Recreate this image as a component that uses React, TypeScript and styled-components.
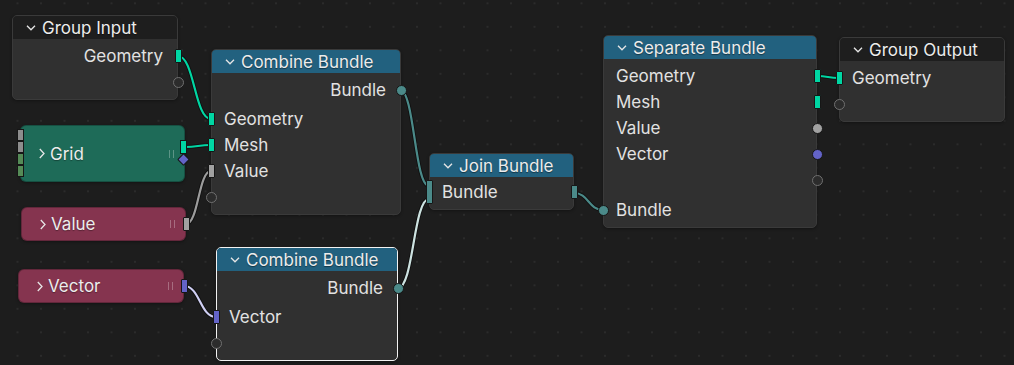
import styled, { createGlobalStyle } from "styled-components"

const GlobalStyle = createGlobalStyle`
  html, body { margin: 0; padding: 0; background: #1d1d1d; }
  body { font-family: Inter, "Noto Sans", "DejaVu Sans", sans-serif; }
`

const COLORS = {
  geometry: "#00d6a3",
  float: "#a1a1a1",
  vector: "#6363c7",
  bundle: "#4b8a89",
  int: "#558b57",
}

const Canvas = styled.div`
  position: relative;
  width: 1014px;
  height: 365px;
  overflow: hidden;
  background-color: #1d1d1d;
  background-image: radial-gradient(circle, #2b2b2b 0.9px, transparent 1.1px);
  background-size: 23.5px 23.5px;
  background-position: 5.75px -8.45px;
`

const Wires = styled.svg`
  position: absolute;
  left: 0;
  top: 0;
  pointer-events: none;
`

const Node = styled.div<{ $x: number; $y: number; $w: number; $selected?: boolean }>`
  position: absolute;
  left: ${(p) => p.$x}px;
  top: ${(p) => p.$y}px;
  width: ${(p) => p.$w}px;
  box-sizing: border-box;
  background: #303030;
  border: 1px solid ${(p) => (p.$selected ? "#f2f2f2" : "#3a3a3a")};
  border-radius: 5px;
  color: #e2e2e2;
  font-size: 17px;
  box-shadow: 0 1px 3px rgba(0, 0, 0, 0.35);
`

const Header = styled.div<{ $color: string }>`
  display: flex;
  align-items: center;
  gap: 6px;
  height: 23px;
  padding-left: 13px;
  background: ${(p) => p.$color};
  border-radius: 4px 4px 0 0;
  color: #ececec;
  text-shadow: 0 1px 1px rgba(0, 0, 0, 0.45);
  white-space: nowrap;
`

const Body = styled.div<{ $padTop?: number }>`
  display: flex;
  flex-direction: column;
  padding: ${(p) => p.$padTop ?? 4}px 0 4px;
`

const Row = styled.div<{ $right?: boolean }>`
  position: relative;
  display: flex;
  align-items: center;
  justify-content: ${(p) => (p.$right ? "flex-end" : "flex-start")};
  height: 26px;
  padding: 0 14px 0 12px;
  white-space: nowrap;
`

const Gap = styled.div<{ $h: number }>`
  height: ${(p) => p.$h}px;
`

type Shape = "rect" | "circle" | "hollow" | "diamond" | "multi"

const SIZES: Record<Shape, [number, number]> = {
  rect: [7, 14],
  multi: [7, 24],
  circle: [11, 11],
  hollow: [11, 11],
  diamond: [9, 9],
}

const Socket = styled.span<{ $shape: Shape; $color?: string; $side: "left" | "right"; $inline?: boolean }>`
  display: block;
  position: ${(p) => (p.$inline ? "relative" : "absolute")};
  top: ${(p) => (p.$inline ? "0" : "50%")};
  ${(p) => p.$side}: ${(p) => (p.$inline ? 0 : -1 - SIZES[p.$shape][0] / 2)}px;
  box-sizing: border-box;
  width: ${(p) => SIZES[p.$shape][0]}px;
  height: ${(p) => SIZES[p.$shape][1]}px;
  margin-top: ${(p) => (p.$inline ? 1 : -SIZES[p.$shape][1] / 2)}px;
  background: ${(p) => (p.$shape === "hollow" ? "#2c2c2c" : p.$color)};
  border: 1px solid ${(p) => (p.$shape === "hollow" ? "#707070" : "#161616")};
  border-radius: ${(p) => (p.$shape === "circle" || p.$shape === "hollow" ? "50%" : "1px")};
  transform: ${(p) => (p.$shape === "diamond" ? "rotate(45deg)" : "none")};
  z-index: 2;
`

const Collapsed = styled.div<{ $x: number; $y: number; $w: number; $h: number; $color: string }>`
  position: absolute;
  left: ${(p) => p.$x}px;
  top: ${(p) => p.$y}px;
  width: ${(p) => p.$w}px;
  height: ${(p) => p.$h}px;
  box-sizing: border-box;
  display: flex;
  align-items: center;
  gap: 5px;
  padding-left: 18px;
  background: ${(p) => p.$color};
  border: 1px solid rgba(0, 0, 0, 0.25);
  border-radius: 6px;
  color: #ececec;
  font-size: 17px;
  text-shadow: 0 1px 1px rgba(0, 0, 0, 0.35);
  box-shadow: 0 1px 3px rgba(0, 0, 0, 0.35);
`

const Grip = styled.span`
  position: absolute;
  right: 10px;
  top: 50%;
  width: 3px;
  height: 8px;
  margin-top: -4px;
  border-left: 1.5px solid rgba(255, 255, 255, 0.28);
  border-right: 1.5px solid rgba(255, 255, 255, 0.28);
`

const SideSockets = styled.div<{ $side: "left" | "right"; $top: number }>`
  position: absolute;
  ${(p) => p.$side}: -4px;
  top: ${(p) => p.$top}px;
  display: flex;
  flex-direction: column;
  align-items: center;
`

const Stripe = styled.span<{ $color: string; $h?: number }>`
  display: block;
  box-sizing: border-box;
  width: 7px;
  height: ${(p) => p.$h ?? 12}px;
  background: ${(p) => p.$color};
  border: 1px solid #161616;
`

const Chevron = ({ open }: { open: boolean }) =>
  open ? (
    <svg width="10" height="6" viewBox="0 0 10 6">
      <polyline points="1,0.8 5,4.8 9,0.8" fill="none" stroke="#e6e6e6" strokeWidth="1.3" />
    </svg>
  ) : (
    <svg width="6" height="11" viewBox="0 0 6 11">
      <polyline points="0.8,1 5,5.5 0.8,10" fill="none" stroke="#e6e6e6" strokeWidth="1.3" />
    </svg>
  )

const wire = (x1: number, y1: number, x2: number, y2: number) => {
  const h = Math.max(Math.abs(x2 - x1) * 0.5, 8)
  return `M${x1},${y1} C${x1 + h},${y1} ${x2 - h},${y2} ${x2},${y2}`
}

const links = [
  { d: wire(178, 56, 211, 119), c: COLORS.geometry },
  { d: wire(185, 147, 211, 145), c: COLORS.geometry },
  { d: wire(186, 224, 211, 171), c: "#9c9c9c" },
  { d: wire(184, 286, 216, 317), c: "#cfcff3" },
  { d: wire(400, 90, 429, 186), c: COLORS.bundle },
  { d: wire(398, 288, 429, 199), c: "#cde3e1" },
  { d: wire(574, 193, 603, 210), c: COLORS.bundle },
  { d: wire(817, 76, 839, 78), c: COLORS.geometry },
]

const BLUE = "#22617f"

export default function App() {
  return (
    <>
      <GlobalStyle />
      <Canvas>
        <Wires width="1014" height="365">
          {links.map((l, i) => (
            <g key={i}>
              <path d={l.d} fill="none" stroke="rgba(0,0,0,0.45)" strokeWidth="4" />
              <path d={l.d} fill="none" stroke={l.c} strokeWidth="2.2" />
            </g>
          ))}
        </Wires>

        <Node $x={12} $y={15} $w={166}>
          <Header $color="#1e1e1e">
            <Chevron open />
            Group Input
          </Header>
          <Body>
            <Row $right>
              Geometry
              <Socket $side="right" $shape="rect" $color={COLORS.geometry} />
            </Row>
            <Row $right>
              <Socket $side="right" $shape="hollow" />
            </Row>
          </Body>
        </Node>

        <Collapsed $x={20} $y={125} $w={165} $h={57} $color="#1e6b58">
          <SideSockets $side="left" $top={3}>
            <Stripe $color="#8d8d8d" />
            <Stripe $color="#8d8d8d" />
            <Stripe $color={COLORS.int} />
            <Stripe $color={COLORS.int} />
          </SideSockets>
          <Chevron open={false} />
          Grid
          <Grip />
          <SideSockets $side="right" $top={14}>
            <Stripe $color={COLORS.geometry} $h={14} />
            <Socket $inline $side="right" $shape="diamond" $color={COLORS.vector} />
          </SideSockets>
        </Collapsed>

        <Collapsed $x={21} $y={207} $w={165} $h={34} $color="#85344f">
          <Chevron open={false} />
          Value
          <Grip />
          <Socket $side="right" $shape="rect" $color={COLORS.float} />
        </Collapsed>

        <Collapsed $x={18} $y={269} $w={166} $h={34} $color="#85344f">
          <Chevron open={false} />
          Vector
          <Grip />
          <Socket $side="right" $shape="rect" $color={COLORS.vector} />
        </Collapsed>

        <Node $x={211} $y={49} $w={190}>
          <Header $color={BLUE}>
            <Chevron open />
            Combine Bundle
          </Header>
          <Body>
            <Row $right>
              Bundle
              <Socket $side="right" $shape="circle" $color={COLORS.bundle} />
            </Row>
            <Gap $h={3} />
            <Row>
              <Socket $side="left" $shape="rect" $color={COLORS.geometry} />
              Geometry
            </Row>
            <Row>
              <Socket $side="left" $shape="rect" $color={COLORS.geometry} />
              Mesh
            </Row>
            <Row>
              <Socket $side="left" $shape="rect" $color={COLORS.float} />
              Value
            </Row>
            <Row>
              <Socket $side="left" $shape="hollow" />
            </Row>
          </Body>
        </Node>

        <Node $x={216} $y={247} $w={182} $selected>
          <Header $color={BLUE}>
            <Chevron open />
            Combine Bundle
          </Header>
          <Body>
            <Row $right>
              Bundle
              <Socket $side="right" $shape="circle" $color={COLORS.bundle} />
            </Row>
            <Gap $h={3} />
            <Row>
              <Socket $side="left" $shape="rect" $color={COLORS.vector} />
              Vector
            </Row>
            <Row>
              <Socket $side="left" $shape="hollow" />
            </Row>
          </Body>
        </Node>

        <Node $x={429} $y={153} $w={145}>
          <Header $color={BLUE}>
            <Chevron open />
            Join Bundle
          </Header>
          <Body $padTop={2}>
            <Row>
              <Socket $side="left" $shape="multi" $color={COLORS.bundle} />
              Bundle
              <Socket $side="right" $shape="rect" $color={COLORS.bundle} />
            </Row>
          </Body>
        </Node>

        <Node $x={603} $y={35} $w={214}>
          <Header $color={BLUE}>
            <Chevron open />
            Separate Bundle
          </Header>
          <Body>
            <Row>
              Geometry
              <Socket $side="right" $shape="rect" $color={COLORS.geometry} />
            </Row>
            <Row>
              Mesh
              <Socket $side="right" $shape="rect" $color={COLORS.geometry} />
            </Row>
            <Row>
              Value
              <Socket $side="right" $shape="circle" $color={COLORS.float} />
            </Row>
            <Row>
              Vector
              <Socket $side="right" $shape="circle" $color={COLORS.vector} />
            </Row>
            <Row>
              <Socket $side="right" $shape="hollow" />
            </Row>
            <Gap $h={4} />
            <Row>
              <Socket $side="left" $shape="circle" $color={COLORS.bundle} />
              Bundle
            </Row>
          </Body>
        </Node>

        <Node $x={839} $y={37} $w={166}>
          <Header $color="#1e1e1e">
            <Chevron open />
            Group Output
          </Header>
          <Body>
            <Row>
              <Socket $side="left" $shape="rect" $color={COLORS.geometry} />
              Geometry
            </Row>
            <Row>
              <Socket $side="left" $shape="hollow" />
            </Row>
          </Body>
        </Node>
      </Canvas>
    </>
  )
}
